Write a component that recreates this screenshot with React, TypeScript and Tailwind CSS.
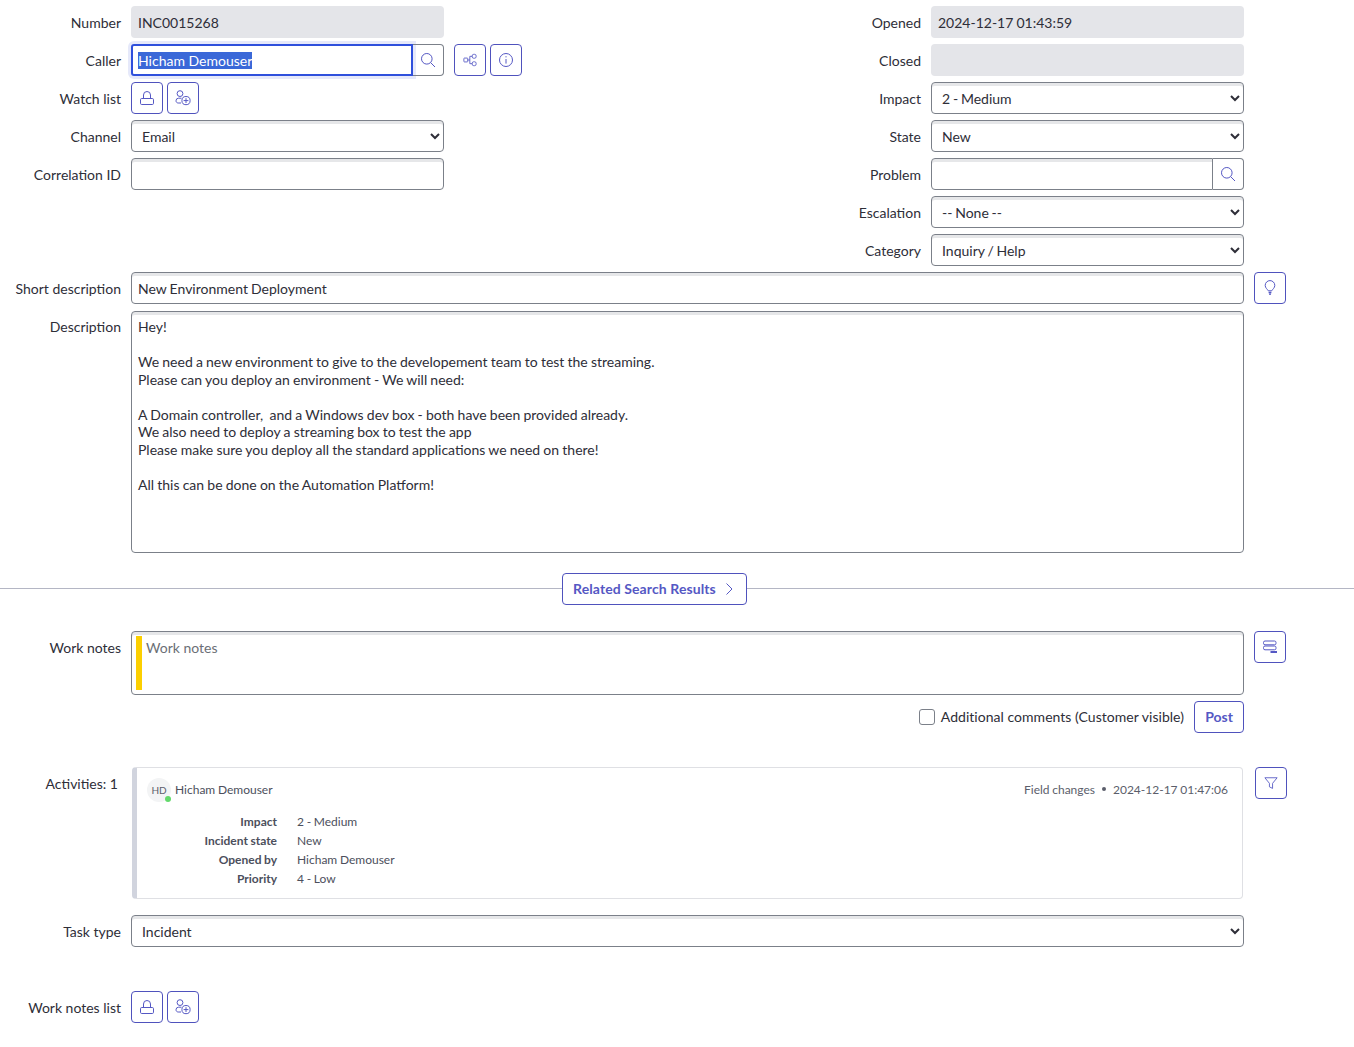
import React, { useEffect, useRef } from 'react';

const inputShell =
  'h-8 rounded-[4px] border border-[#7b8089] bg-white shadow-[inset_0_3px_0_#e6e7e9] text-[#2e2e38]';

const IconButton = ({ children, className = '' }: { children: React.ReactNode; className?: string }) => (
  <button
    type="button"
    className={`flex h-8 w-8 shrink-0 items-center justify-center rounded-[4px] border border-[#4f52bd] bg-white text-[#5558c4] ${className}`}
  >
    {children}
  </button>
);

const Svg = ({ children, size = 16 }: { children: React.ReactNode; size?: number }) => (
  <svg width={size} height={size} viewBox="0 0 16 16" fill="none" stroke="currentColor" strokeWidth="1">
    {children}
  </svg>
);

const SearchIcon = () => (
  <Svg>
    <circle cx="6.8" cy="6.8" r="5.3" />
    <path d="M10.7 10.7 15 15" />
  </Svg>
);

const LockIcon = () => (
  <Svg>
    <path d="M4.5 8.5V5a3.5 3.5 0 0 1 7 0v3.5" />
    <rect x="1.5" y="8.5" width="13" height="6" rx="1.2" />
  </Svg>
);

const AddUserIcon = () => (
  <Svg>
    <circle cx="5" cy="3.6" r="2.9" />
    <path d="M6.4 8.2H3.6A2.6 2.6 0 0 0 1 10.8c0 1.3 1 2.2 2.2 2.2H6" />
    <circle cx="11" cy="10.6" r="4.1" />
    <path d="M11 8.2v4.8M8.6 10.6h4.8" />
  </Svg>
);

const TreeIcon = () => (
  <Svg size={14}>
    <rect x="1" y="5.8" width="4.4" height="4.4" rx="0.6" />
    <rect x="10.5" y="1.5" width="4.5" height="4.5" rx="1.8" />
    <rect x="10.5" y="10" width="4.5" height="4.5" rx="1.8" />
    <path d="M5.4 8h2.4M7.8 3.8v8.4M7.8 3.8h2.7M7.8 12.2h2.7" />
  </Svg>
);

const InfoIcon = () => (
  <Svg>
    <circle cx="8" cy="8" r="6.5" />
    <path d="M8 7v4.6M8 4.2v1.2" />
  </Svg>
);

const BulbIcon = () => (
  <Svg>
    <path d="M6.3 10.8C5.6 9.4 3.2 8 3.2 5.4a4.8 4.8 0 0 1 9.6 0c0 2.6-2.4 4-3.1 5.4z" />
    <path d="M6.6 12.5h2.8M7.2 14.2h1.6" strokeWidth="1.4" />
  </Svg>
);

const TemplateIcon = () => (
  <Svg>
    <rect x="1.5" y="2" width="12.5" height="3.8" rx="1.5" />
    <rect x="1.5" y="7" width="12.5" height="3.8" rx="1.5" />
    <path d="M8.5 13h6.5" strokeWidth="2" />
  </Svg>
);

const FilterIcon = () => (
  <Svg size={14}>
    <path d="M1 2h14L9.8 8.4v5.8l-3.6-1.8v-4z" strokeLinejoin="round" />
  </Svg>
);

const Field = ({ label, children }: { label: string; children: React.ReactNode }) => (
  <div className="flex h-8 items-center">
    <label className="mr-[10px] w-[121px] shrink-0 pt-px text-right whitespace-nowrap">{label}</label>
    {children}
  </div>
);

const ReadOnly = ({ value = '' }: { value?: string }) => (
  <div className="flex h-8 w-[313px] items-center rounded-[4px] bg-[#e4e5e9] px-[7px] pt-px text-[#2e2e38] [word-spacing:-0.5px]">
    {value}
  </div>
);

const Select = ({ value, options, className = 'w-[313px]' }: { value: string; options: string[]; className?: string }) => (
  <select
    defaultValue={value}
    className={`${inputShell} appearance-auto pl-[6px] pr-[2px] outline-none [word-spacing:-0.8px] ${className}`}
  >
    {options.map((o) => (
      <option key={o}>{o}</option>
    ))}
  </select>
);

const descriptionText = `Hey!

We need a new environment to give to the developement team to test the streaming.
Please can you deploy an environment - We will need:

A Domain controller,  and a Windows dev box - both have been provided already.
We also need to deploy a streaming box to test the app
Please make sure you deploy all the standard applications we need on there!

All this can be done on the Automation Platform!`;

const changes = [
  ['Impact', '2 - Medium'],
  ['Incident state', 'New'],
  ['Opened by', 'Hicham Demouser'],
  ['Priority', '4 - Low'],
];

const App = () => {
  const callerRef = useRef<HTMLInputElement>(null);

  useEffect(() => {
    callerRef.current?.focus();
    callerRef.current?.select();
  }, []);

  return (
    <div className="min-h-[1047px] bg-white pt-[6px] font-['Lato',sans-serif] text-[14px] leading-5 text-[#2e2e38]">
      <div className="flex">
        <div className="flex w-[800px] shrink-0 flex-col gap-[6px]">
          <Field label="Number">
            <ReadOnly value="INC0015268" />
          </Field>
          <Field label="Caller">
            <div className="flex w-[313px]">
              <input
                ref={callerRef}
                defaultValue="Hicham Demouser"
                className="h-8 w-[282px] rounded-l-[3px] border-2 border-[#2f50dc] bg-white px-[5px] text-[#2e2e38] shadow-[0_0_0_3px_#e6e9fa] outline-none selection:bg-[#3a68d8] selection:text-white"
              />
              <button
                type="button"
                className="flex h-8 flex-1 items-center justify-center rounded-r-[4px] border border-l-0 border-[#7b8089] text-[#5558c4]"
              >
                <SearchIcon />
              </button>
            </div>
            <IconButton className="ml-[10px]">
              <TreeIcon />
            </IconButton>
            <IconButton className="ml-1">
              <InfoIcon />
            </IconButton>
          </Field>
          <Field label="Watch list">
            <IconButton>
              <LockIcon />
            </IconButton>
            <IconButton className="ml-1">
              <AddUserIcon />
            </IconButton>
          </Field>
          <Field label="Channel">
            <Select value="Email" options={['Email', 'Phone', 'Chat']} />
          </Field>
          <Field label="Correlation ID">
            <input className={`${inputShell} w-[313px] px-[6px] outline-none`} />
          </Field>
        </div>
        <div className="flex w-[444px] shrink-0 flex-col gap-[6px]">
          <Field label="Opened">
            <ReadOnly value="2024-12-17 01:43:59" />
          </Field>
          <Field label="Closed">
            <ReadOnly />
          </Field>
          <Field label="Impact">
            <Select value="2 - Medium" options={['1 - High', '2 - Medium', '3 - Low']} />
          </Field>
          <Field label="State">
            <Select value="New" options={['New', 'In Progress', 'Resolved']} />
          </Field>
          <Field label="Problem">
            <div className="flex w-[313px]">
              <input className={`${inputShell} w-[282px] rounded-r-none px-[6px] outline-none`} />
              <button
                type="button"
                className="flex h-8 flex-1 items-center justify-center rounded-r-[4px] border border-l-0 border-[#7b8089] text-[#5558c4]"
              >
                <SearchIcon />
              </button>
            </div>
          </Field>
          <Field label="Escalation">
            <Select value="-- None --" options={['-- None --', 'Overdue']} />
          </Field>
          <Field label="Category">
            <Select value="Inquiry / Help" options={['Inquiry / Help', 'Software', 'Hardware']} />
          </Field>
        </div>
      </div>

      <div className="mt-[6px]">
        <Field label="Short description">
          <input
            defaultValue="New Environment Deployment"
            className={`${inputShell} w-[1113px] px-[6px] outline-none [word-spacing:-0.5px]`}
          />
          <IconButton className="ml-[10px]">
            <BulbIcon />
          </IconButton>
        </Field>
      </div>

      <div className="mt-[7px] flex">
        <label className="mr-[10px] w-[121px] shrink-0 pt-[6px] text-right">Description</label>
        <textarea
          readOnly
          defaultValue={descriptionText}
          className="h-[242px] w-[1113px] resize-none rounded-[4px] border border-[#7b8089] bg-white px-[6px] pt-[6px] leading-[17.5px] shadow-[inset_0_3px_0_#e6e7e9] outline-none [word-spacing:-0.4px]"
        />
      </div>

      <div className="mt-5 flex items-start">
        <div className="mt-[15px] h-px w-[562px] bg-[#b4b6c4]" />
        <button
          type="button"
          className="flex h-8 w-[185px] items-center rounded-[4px] border border-[#4f52bd] pl-[10px] font-bold tracking-[0.1px] text-[#5558c4]"
        >
          Related Search Results
          <svg className="ml-[9px]" width="9" height="14" viewBox="0 0 9 14" fill="none" stroke="currentColor">
            <path d="M1.5 1.5 7 7l-5.5 5.5" />
          </svg>
        </button>
        <div className="mt-[15px] h-px flex-1 bg-[#b4b6c4]" />
      </div>

      <div className="mt-[26px] flex">
        <label className="mr-[10px] w-[121px] shrink-0 pt-[7px] text-right">Work notes</label>
        <div className="flex h-16 w-[1113px] gap-1 rounded-[4px] border border-[#7b8089] p-1 shadow-[inset_0_3px_0_#e6e7e9]">
          <div className="w-[6px] shrink-0 bg-[#fccf00]" />
          <span className="pt-[2px] text-[#6b6f76]">Work notes</span>
        </div>
        <IconButton className="ml-[10px]">
          <TemplateIcon />
        </IconButton>
      </div>

      <div className="mt-[6px] flex w-[1244px] items-center justify-end">
        <span className="h-4 w-4 rounded-[3px] border border-[#7b8089]" />
        <span className="ml-[6px] tracking-[0.03px] whitespace-nowrap">Additional comments (Customer visible)</span>
        <button
          type="button"
          className="ml-[10px] h-8 w-[50px] rounded-[4px] border border-[#4f52bd] font-bold text-[#5558c4]"
        >
          Post
        </button>
      </div>

      <div className="mt-[34px] flex">
        <label className="mr-[14px] w-[118px] shrink-0 pt-[7px] text-right">Activities: 1</label>
        <div className="h-[132px] w-[1111px] rounded-[4px] border border-l-[5px] border-[#dfe0e4] border-l-[#d1d4de] px-[11px] pt-[10px] text-[12px] leading-[19px] text-[#4c4f5c] [word-spacing:-0.4px]">
          <div className="flex h-6 -translate-y-px items-center justify-between pr-[3px]">
            <div className="flex items-center">
              <div className="relative flex h-6 w-6 -translate-x-px translate-y-px items-center justify-center rounded-full bg-[#f3f4f5] text-[10px] text-[#5b5e6b]">
                HD
                <span className="absolute right-0 bottom-0 h-[6px] w-[6px] rounded-full bg-[#62d96b]" />
              </div>
              <span className="ml-[3px]">Hicham Demouser</span>
            </div>
            <div className="flex items-center text-[#5b5e6b]">
              <span>Field changes</span>
              <span className="mx-[7px] h-1 w-1 rounded-full bg-[#5b5e6b]" />
              <span>2024-12-17 01:47:06</span>
            </div>
          </div>
          <div className="mt-[10px] flex flex-col">
            {changes.map(([name, value]) => (
              <div key={name} className="flex">
                <span className="w-[129px] text-right font-bold">{name}</span>
                <span className="ml-5">{value}</span>
              </div>
            ))}
          </div>
        </div>
        <IconButton className="ml-3">
          <FilterIcon />
        </IconButton>
      </div>

      <div className="mt-4">
        <Field label="Task type">
          <Select value="Incident" options={['Incident', 'Problem', 'Change']} className="w-[1113px]" />
        </Field>
      </div>

      <div className="mt-11">
        <Field label="Work notes list">
          <IconButton>
            <LockIcon />
          </IconButton>
          <IconButton className="ml-1">
            <AddUserIcon />
          </IconButton>
        </Field>
      </div>
    </div>
  );
};

export default App;
